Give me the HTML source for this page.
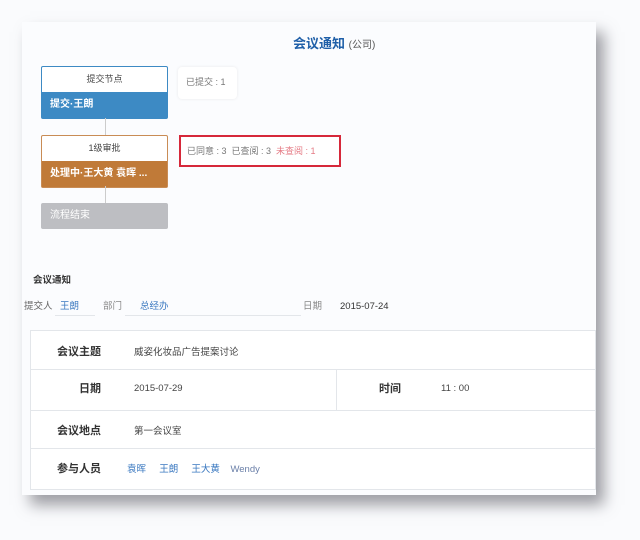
<!DOCTYPE html>
<html><head><meta charset="utf-8"><style>
*{margin:0;padding:0;box-sizing:border-box}
body{width:640px;height:540px;background:#fafbfd;position:relative;overflow:hidden;font-family:"Liberation Sans","Noto Sans CJK SC",sans-serif;font-size:10px;color:#333}
.card{position:absolute;left:22px;top:22px;width:574px;height:473px;background:#fbfcfe;box-shadow:8px 10px 14px rgba(80,80,90,.55)}
.a{position:absolute;white-space:nowrap}
.node{position:absolute;left:41px;width:127px;border:1px solid #c9d3df;border-radius:2px;background:#fff}
.nh{height:25px;text-align:center;line-height:25px;font-size:9px;color:#444}
.nb{height:26px;line-height:26px;padding-left:8px;color:#fff;font-size:10px;font-weight:bold}
.line{position:absolute;left:105px;width:1px;background:#ccc}
.tbl{position:absolute;left:30px;top:330px;width:566px;height:160px;border:1px solid #e3e6ea;background:#fff}
.row{position:absolute;left:0;right:0;border-bottom:1px solid #e3e6ea}
.lb{position:absolute;font-weight:bold;font-size:11px;color:#333;text-align:right;width:80px;white-space:nowrap}
.v{position:absolute;font-size:9.5px;color:#444;white-space:nowrap}
.blue{color:#3a78c0}
</style></head><body>
<div class="card"></div>
<div class="a" style="left:293px;top:33px;font-size:13px;font-weight:bold;color:#1f5fa8">会议通知 <span style="font-weight:normal;font-size:10px;color:#555">(公司)</span></div>

<div class="node" style="top:66px;border-color:#3d8ac4"><div class="nh">提交节点</div><div class="nb" style="background:#3d8ac4">提交·王朗</div></div>
<div class="line" style="top:118px;height:17px"></div>
<div class="node" style="top:135px;border-color:#c98c55"><div class="nh">1级审批</div><div class="nb" style="background:#c07a38">处理中·王大黄 袁晖 ...</div></div>
<div class="line" style="top:186px;height:17px"></div>
<div class="node" style="top:203px;height:26px;border-color:#bdbec2;background:#bdbec2"><div class="nb" style="background:#bdbec2;height:24px;line-height:24px;font-weight:normal">流程结束</div></div>

<div class="a" style="left:178px;top:67px;width:59px;height:32px;background:#fff;border-radius:4px;box-shadow:0 0 3px rgba(0,0,0,.08);line-height:30px;padding-left:8px;font-size:9px;color:#777">已提交 : 1</div>
<div class="a" style="left:179px;top:135px;width:162px;height:32px;background:#fff;border:2px solid #d6283a;line-height:28px;padding-left:6px;font-size:9px;color:#777">已同意 : 3 &nbsp;已查阅 : 3 &nbsp;<span style="color:#e57b85">未查阅 : 1</span></div>

<div class="a" style="left:33px;top:272px;font-size:9.5px;font-weight:bold">会议通知</div>
<div class="a" style="left:24px;top:298px;font-size:9.5px;color:#666">提交人</div>
<div class="a blue" style="left:60px;top:298px;font-size:9.5px">王朗</div>
<div class="a" style="left:55px;top:315px;width:40px;height:1px;background:#e3e6ea"></div>
<div class="a" style="left:103px;top:298px;font-size:9.5px;color:#888">部门</div>
<div class="a blue" style="left:140px;top:298px;font-size:9.5px">总经办</div>
<div class="a" style="left:125px;top:315px;width:176px;height:1px;background:#e3e6ea"></div>
<div class="a" style="left:303px;top:298px;font-size:9.5px;color:#888">日期</div>
<div class="a" style="left:340px;top:298px;font-size:9.5px;line-height:14px;padding-top:2px">2015-07-24</div>

<div class="tbl">
 <div class="row" style="top:0;height:39px"><div class="lb" style="left:-10px;top:12px">会议主题</div><div class="v" style="left:103px;top:13px">威姿化妆品广告提案讨论</div></div>
 <div class="row" style="top:39px;height:41px"><div class="lb" style="left:-10px;top:10px">日期</div><div class="v" style="left:103px;top:13px">2015-07-29</div>
  <div style="position:absolute;left:305px;top:0;width:1px;height:40px;background:#e3e6ea"></div>
  <div class="lb" style="left:290px;top:10px">时间</div><div class="v" style="left:410px;top:13px">11 : 00</div></div>
 <div class="row" style="top:80px;height:38px"><div class="lb" style="left:-10px;top:11px">会议地点</div><div class="v" style="left:103px;top:12px">第一会议室</div></div>
 <div class="row" style="top:118px;height:41px;border-bottom:none"><div class="lb" style="left:-10px;top:11px">参与人员</div><div class="v blue" style="left:96px;top:12px">袁晖 &nbsp;&nbsp;&nbsp; 王朗 &nbsp;&nbsp;&nbsp; 王大黄 &nbsp;&nbsp;&nbsp;<span style="color:#6a7fa8">Wendy</span></div></div>
</div>
</body></html>
